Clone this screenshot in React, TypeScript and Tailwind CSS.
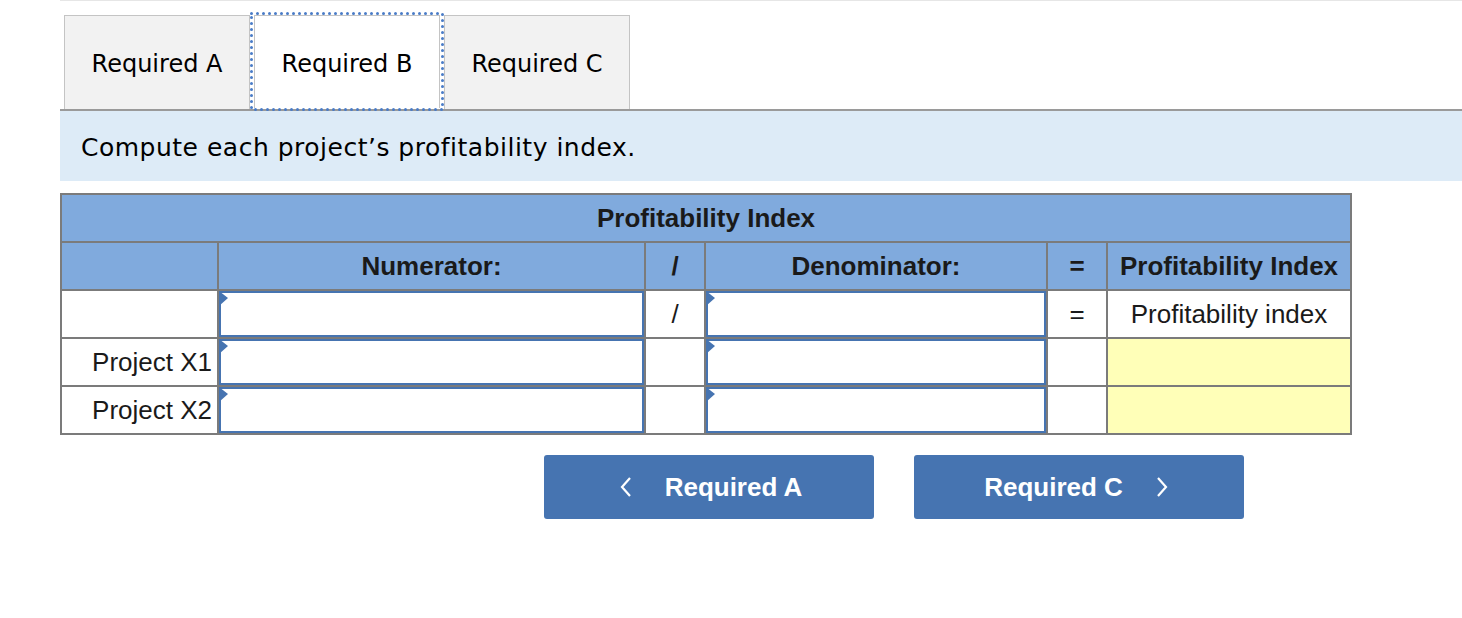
import { ReactNode } from "react";

function Marker() {
  return (
    <svg className="absolute left-0 top-0" width="9" height="15" viewBox="0 0 9 15">
      <polygon points="0,0 9,7 0,15" fill="#4674b1" />
    </svg>
  );
}

function InputCell() {
  return (
    <div className="relative bg-white">
      <div className="h-full w-full border-2 border-[#4674b1] bg-white" />
      <Marker />
    </div>
  );
}

function Cell({ children, className = "" }: { children?: ReactNode; className?: string }) {
  return <div className={`flex items-center justify-center ${className}`}>{children}</div>;
}

// focus ring made of round dots, like the browser's dotted outline
function DottedRing() {
  return (
    <svg className="pointer-events-none absolute inset-0 h-full w-full overflow-visible">
      <rect
        x="1.5"
        y="1.5"
        width="calc(100% - 3px)"
        height="calc(100% - 3px)"
        fill="none"
        stroke="#4a7cc7"
        strokeWidth="3"
        strokeLinecap="round"
        strokeDasharray="0 6"
      />
    </svg>
  );
}

export default function App() {
  return (
    <div className="min-h-[618px] bg-white pl-[60px] font-['Liberation_Sans',Arial,sans-serif] text-[#1a1a1a]">
      <div className="h-px bg-[#e6e6e6]" />

      {/* tabs */}
      <div className="mt-[11px] flex items-end pl-[4px] font-['DejaVu_Sans',Verdana,sans-serif] text-[24px] text-black">
        <div className="flex h-[94px] w-[186px] items-center justify-center border border-b-0 border-[#c4c4c4] bg-[#f2f2f2] pt-[3px]">
          Required A
        </div>
        <div className="relative z-10 -mb-[2px] px-[4px] pt-[3px] pb-[3px]">
          <div className="flex h-[93px] w-[186px] items-center justify-center border border-b-0 border-[#c4c4c4] bg-white pt-[3px]">
            Required B
          </div>
          <DottedRing />
        </div>
        <div className="flex h-[94px] w-[186px] items-center justify-center border border-b-0 border-[#c4c4c4] bg-[#f2f2f2] pt-[3px]">
          Required C
        </div>
      </div>
      <div className="h-[2px] bg-[#9a9a9a]" />

      {/* instruction */}
      <div className="flex h-[70px] items-center bg-[#ddebf7] pl-[21px] pt-[3px] font-['DejaVu_Sans',Verdana,sans-serif] text-[25px] tracking-[0.5px] text-black">
        Compute each project’s profitability index.
      </div>

      {/* table */}
      <div className="mt-[12px] grid w-[1292px] grid-cols-[155px_425px_58px_340px_58px_242px] grid-rows-[46px_46px_46px_46px_46px] gap-[2px] bg-[#7b7b7b] p-[2px] text-[26px] leading-none">
        <Cell className="col-span-6 bg-[#80aadd] font-bold">Profitability Index</Cell>

        <Cell className="bg-[#80aadd]" />
        <Cell className="bg-[#80aadd] font-bold">Numerator:</Cell>
        <Cell className="bg-[#80aadd] font-bold">/</Cell>
        <Cell className="bg-[#80aadd] font-bold">Denominator:</Cell>
        <Cell className="bg-[#80aadd] font-bold">=</Cell>
        <Cell className="bg-[#80aadd] font-bold">Profitability Index</Cell>

        <Cell className="bg-white" />
        <InputCell />
        <Cell className="bg-white">/</Cell>
        <InputCell />
        <Cell className="bg-white">=</Cell>
        <Cell className="bg-white">Profitability index</Cell>

        {["Project X1", "Project X2"].map((p) => (
          <div key={p} className="contents">
            <div className="flex items-center justify-end bg-white pr-[5px]">{p}</div>
            <InputCell />
            <Cell className="bg-white" />
            <InputCell />
            <Cell className="bg-white" />
            <Cell className="bg-[#ffffb8]" />
          </div>
        ))}
      </div>

      {/* nav buttons */}
      <div className="mt-[20px] flex gap-[40px] pl-[484px] text-[26px] font-bold text-white">
        <button className="flex h-[64px] w-[330px] items-center justify-center gap-[33px] rounded-[3px] bg-[#4674b1] pl-[4px]">
          <svg width="12" height="22" viewBox="0 0 12 22" fill="none">
            <polyline points="10,2 2,11 10,20" stroke="white" strokeWidth="2.2" />
          </svg>
          <span>Required A</span>
        </button>
        <button className="flex h-[64px] w-[330px] items-center justify-center gap-[33px] rounded-[3px] bg-[#4674b1] pr-[6px]">
          <span>Required C</span>
          <svg width="12" height="22" viewBox="0 0 12 22" fill="none">
            <polyline points="2,2 10,11 2,20" stroke="white" strokeWidth="2.2" />
          </svg>
        </button>
      </div>
    </div>
  );
}
